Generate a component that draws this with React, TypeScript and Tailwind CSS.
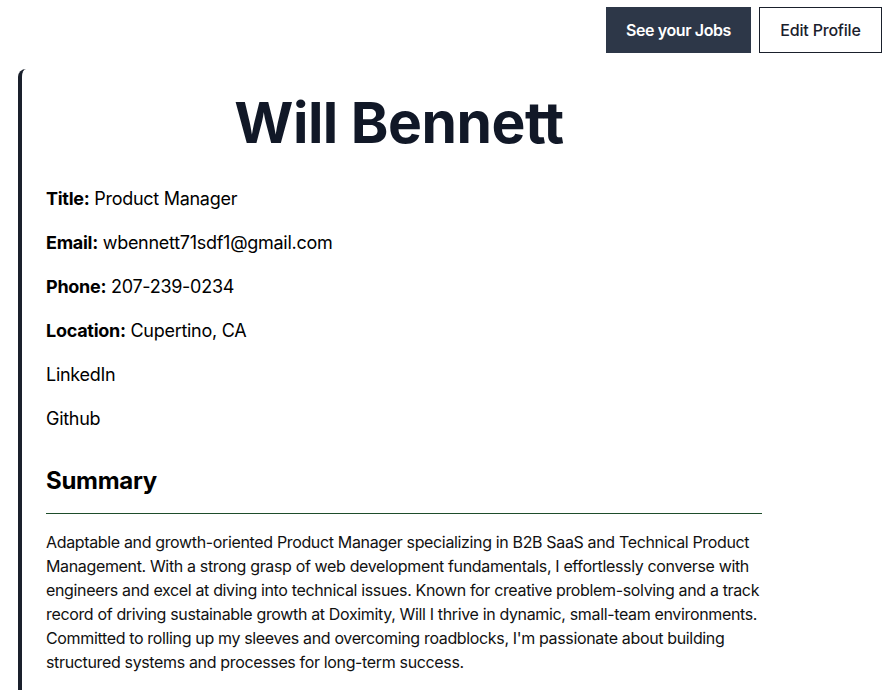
const fields = [
  { label: 'Title', value: 'Product Manager' },
  { label: 'Email', value: 'wbennett71sdf1@gmail.com' },
  { label: 'Phone', value: '207-239-0234' },
  { label: 'Location', value: 'Cupertino, CA' },
];

export default function App() {
  return (
    <div className="min-h-screen bg-white font-['Inter',sans-serif] text-black">
      <div className="flex justify-end gap-2 pt-[7px] pr-[5px]">
        <button
          type="button"
          className="h-[46px] w-[145px] bg-[#2d3748] text-base font-semibold tracking-[-0.4px] text-white"
        >
          See your Jobs
        </button>
        <button
          type="button"
          className="h-[46px] w-[123px] border border-[#1a202c] bg-white text-base font-medium tracking-[-0.2px] text-[#1a202c]"
        >
          Edit Profile
        </button>
      </div>
      <div className="mt-4 ml-[18px] w-[768px] rounded-tl-lg border-l-4 border-[#1a202c] pt-6 pr-6 pl-6">
        <h1 className="mb-8 pr-[10px] text-center text-[57px] leading-[60px] font-bold tracking-[-0.5px] text-[#111827]">
          Will Bennett
        </h1>
        {fields.map((f) => (
          <p key={f.label} className="mb-4 text-lg leading-7 tracking-[-0.28px]">
            <span className="font-bold">{f.label}:</span> {f.value}
          </p>
        ))}
        <p className="mb-4 text-lg leading-7 tracking-[-0.28px]">LinkedIn</p>
        <p className="mb-4 text-lg leading-7 tracking-[-0.28px]">Github</p>
        <h2 className="mt-8 mb-4 text-2xl leading-8 font-bold tracking-[-0.3px]">Summary</h2>
        <hr className="border-[#1e4d2b]" />
        <p className="mt-4 pb-6 text-base leading-6 tracking-[-0.35px] text-[#111]">
          Adaptable and growth-oriented Product Manager specializing in B2B SaaS
          and Technical Product Management. With a strong grasp of web
          development fundamentals, I effortlessly converse with engineers and
          excel at diving into technical issues. Known for creative
          problem-solving and a track record of driving sustainable growth at
          Doximity, Will I thrive in dynamic, small-team environments. Committed
          to rolling up my sleeves and overcoming roadblocks, I'm passionate
          about building structured systems and processes for long-term success.
        </p>
      </div>
    </div>
  );
}
